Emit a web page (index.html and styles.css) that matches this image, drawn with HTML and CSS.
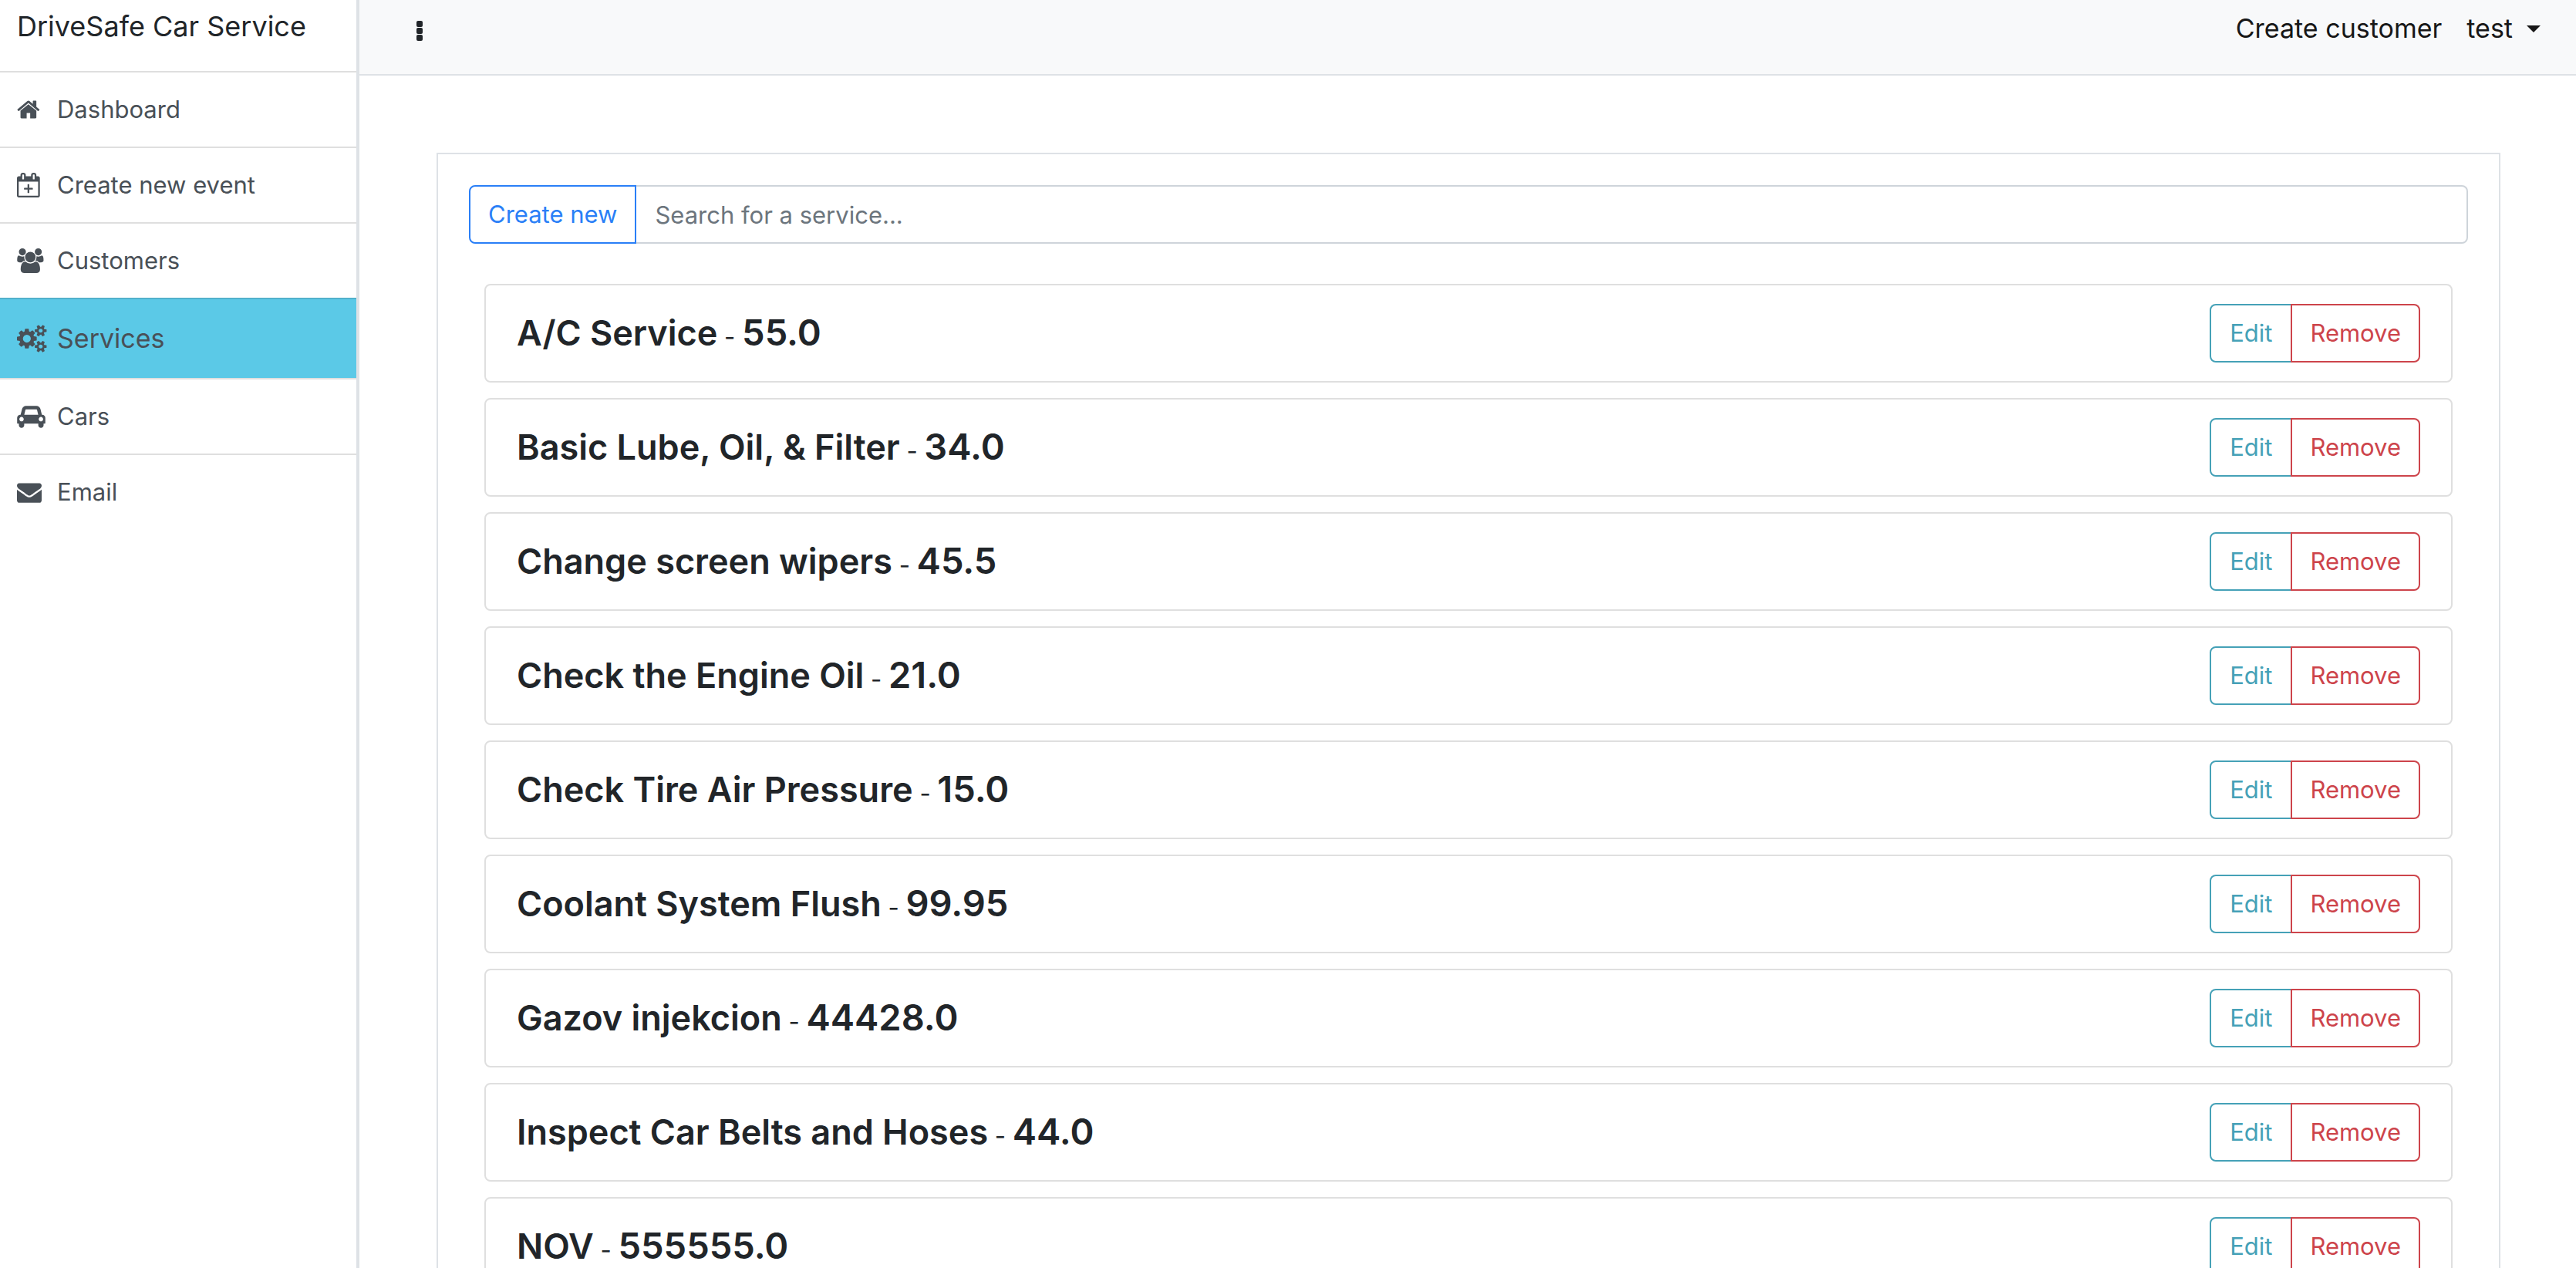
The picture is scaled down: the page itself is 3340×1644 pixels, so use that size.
FILE: index.html
```html
<!DOCTYPE html>
<html lang="en">
<head>
<meta charset="utf-8">
<meta name="viewport" content="width=device-width, initial-scale=1">
<title>DriveSafe Car Service</title>
<link rel="stylesheet" href="styles.css">
</head>
<body>
<div class="layout">
  <aside class="sidebar">
    <div class="brand">DriveSafe Car Service</div>
    <nav class="menu">
      <a class="menu-item" href="#"><span class="menu-icon"><svg viewBox="64 0 1792 1792"><path d="M1472 992v480q0 26-19 45t-45 19h-384v-384h-256v384h-384q-26 0-45-19t-19-45v-480q0-1 .5-3t.5-3l575-474 575 474q1 2 1 6zm223-69l-62 74q-8 9-21 11h-3q-13 0-21-7l-692-577-692 577q-12 8-24 7-13-2-21-11l-62-74q-8-10-7-23.500t11-21.500l719-599q32-26 76-26t76 26l244 204v-195q0-14 9-23t23-9h192q14 0 23 9t9 23v408l219 182q10 8 11 21.500t-7 23.500z"/></svg></span>Dashboard</a>
      <a class="menu-item" href="#"><span class="menu-icon"><svg viewBox="64 0 1792 1792"><path d="M192 1664h1408v-1024h-1408v1024zm384-1216v-288q0-14-9-23t-23-9h-64q-14 0-23 9t-9 23v288q0 14 9 23t23 9h64q14 0 23-9t9-23zm768 0v-288q0-14-9-23t-23-9h-64q-14 0-23 9t-9 23v288q0 14 9 23t23 9h64q14 0 23-9t9-23zm384-64v1280q0 52-38 90t-90 38h-1408q-52 0-90-38t-38-90v-1280q0-52 38-90t90-38h128v-96q0-66 47-113t113-47h64q66 0 113 47t47 113v96h384v-96q0-66 47-113t113-47h64q66 0 113 47t47 113v96h128q52 0 90 38t38 90z"/><rect x="576" y="1088" width="640" height="128" rx="32"/><rect x="832" y="832" width="128" height="640" rx="32"/></svg></span>Create new event</a>
      <a class="menu-item" href="#"><span class="menu-icon"><svg class="wide" viewBox="64 0 2048 1792"><path d="M657 896q-162 5-265 128h-134q-82 0-138-40.500t-56-118.500q0-353 124-353 6 0 43.500 21t97.500 42.500 119 21.500q67 0 133-23-5 37-5 66 0 139 81 256zm1071 637q0 120-73 189.500t-194 69.500h-874q-121 0-194-69.500t-73-189.500q0-53 3.500-103.500t14-109 26.500-108.500 43-97.500 62-81 85.500-53.500 111.500-20q10 0 43 21.500t73 48 107 48 135 21.500 135-21.500 107-48 73-48 43-21.500q61 0 111.500 20t85.500 53.500 62 81 43 97.500 26.500 108.500 14 109 3.500 103.500zm-1024-1277q0 106-75 181t-181 75-181-75-75-181 75-181 181-75 181 75 75 181zm704 384q0 159-112.500 271.500t-271.500 112.500-271.500-112.500-112.500-271.500 112.500-271.500 271.500-112.500 271.500 112.500 112.500 271.500zm576 225q0 78-56 118.500t-138 40.500h-134q-103-123-265-128 81-117 81-256 0-29-5-66 66 23 133 23 59 0 119-21.500t97.500-42.500 43.500-21q124 0 124 353zm-128-609q0 106-75 181t-181 75-181-75-75-181 75-181 181-75 181 75 75 181z"/></svg></span>Customers</a>
      <a class="menu-item active" href="#" aria-current="page"><span class="menu-icon"><svg class="wide" viewBox="-64 0 2048 1792"><path d="M832 896q0-106-75-181t-181-75-181 75-75 181 75 181 181 75 181-75 75-181zm768 512q0-52-38-90t-90-38-90 38-38 90q0 53 37.500 90.500t90.500 37.500 90.500-37.500 37.500-90.500zm0-1024q0-52-38-90t-90-38-90 38-38 90q0 53 37.500 90.500t90.500 37.500 90.500-37.500 37.500-90.500zm-384 421v185q0 10-7 19.500t-16 10.500l-155 24q-11 35-32 76 34 48 90 115 7 11 7 20 0 12-7 19-23 30-82.500 89.500t-78.500 59.500q-11 0-21-7l-115-90q-37 19-77 31-11 108-23 155-7 24-30 24h-186q-11 0-20-7.500t-10-17.500l-23-153q-34-10-75-31l-118 89q-7 7-20 7-11 0-21-8-144-133-144-160 0-9 7-19 10-14 41-53t47-61q-23-44-35-82l-152-24q-10-1-17-9.500t-7-19.500v-185q0-10 7-19.500t16-10.500l155-24q11-35 32-76-34-48-90-115-7-11-7-20 0-12 7-20 22-30 82-89t79-59q11 0 21 7l115 90q34-18 77-32 11-108 23-154 7-24 30-24h186q11 0 20 7.500t10 17.500l23 153q34 10 75 31l118-89q8-7 20-7 11 0 21 8 144 133 144 160 0 8-7 19-12 16-42 54t-45 60q23 48 34 82l152 23q10 2 17 10.500t7 19.500zm640 533v140q0 16-149 31-12 27-30 52 51 113 51 138 0 4-4 7-122 71-124 71-8 0-46-47t-52-68q-20 2-30 2t-30-2q-14 21-52 68t-46 47q-2 0-124-71-4-3-4-7 0-25 51-138-18-25-30-52-149-15-149-31v-140q0-16 149-31 13-29 30-52-51-113-51-138 0-4 4-7 4-2 35-20t59-34 30-16q8 0 46 46.500t52 67.500q20-2 30-2t30 2q51-71 92-112l6-2q4 0 124 70 4 3 4 7 0 25-51 138 17 23 30 52 149 15 149 31zm0-1024v140q0 16-149 31-12 27-30 52 51 113 51 138 0 4-4 7-122 71-124 71-8 0-46-47t-52-68q-20 2-30 2t-30-2q-14 21-52 68t-46 47q-2 0-124-71-4-3-4-7 0-25 51-138-18-25-30-52-149-15-149-31v-140q0-16 149-31 13-29 30-52-51-113-51-138 0-4 4-7 4-2 35-20t59-34 30-16q8 0 46 46.500t52 67.500q20-2 30-2t30 2q51-71 92-112l6-2q4 0 124 70 4 3 4 7 0 25-51 138 17 23 30 52 149 15 149 31z"/></svg></span>Services</a>
      <a class="menu-item" href="#"><span class="menu-icon"><svg class="wide" viewBox="0 0 2048 1792"><path d="M480 1088q0-66-47-113t-113-47-113 47-47 113 47 113 113 47 113-47 47-113zm36-320h1016l-89-357q-2-8-14-17.500t-21-9.500h-768q-9 0-21 9.500t-14 17.500zm1372 320q0-66-47-113t-113-47-113 47-47 113 47 113 113 47 113-47 47-113zm160-96v384q0 14-9 23t-23 9h-96v128q0 80-56 136t-136 56-136-56-56-136v-128h-1024v128q0 80-56 136t-136 56-136-56-56-136v-128h-96q-14 0-23-9t-9-23v-384q0-93 65.500-158.500t158.500-65.500h28l105-419q23-94 104-157.500t179-63.500h768q98 0 179 63.500t104 157.500l105 419h28q93 0 158.500 65.500t65.500 158.500z"/></svg></span>Cars</a>
      <a class="menu-item" href="#"><span class="menu-icon"><svg viewBox="0 0 1792 1792"><path d="M1792 710v794q0 66-47 113t-113 47h-1472q-66 0-113-47t-47-113v-794q44 49 101 87 362 246 497 345 57 42 92.500 65.500t94.500 48 110 24.500h2q51 0 110-24.500t94.500-48 92.500-65.500q170-123 498-345 57-39 100-87zm0-294q0 79-49 151t-122 123q-376 261-468 325-10 7-42.500 31t-54 38.500-52 32.500-57.500 27-50 9h-2q-23 0-50-9t-57.500-27-52-32.500-54-38.500-42.500-31q-91-64-262-182.500t-205-142.500q-62-42-117-115.500t-55-136.500q0-78 41.500-130t118.500-52h1472q65 0 112.500 47t47.500 113z"/></svg></span>Email</a>
    </nav>
  </aside>

  <div class="page">
    <header class="topbar">
      <button class="toggle" type="button" aria-label="Toggle menu"><svg viewBox="0 0 8 28"><rect y="0" width="8" height="8" rx="2"/><rect y="9" width="8" height="8" rx="2"/><rect y="18" width="8" height="8" rx="2"/></svg></button>
      <nav class="topnav">
        <a class="toplink" href="#">Create customer</a>
        <button class="toplink user" type="button" aria-haspopup="true">test<span class="caret"></span></button>
      </nav>
    </header>

    <main class="panel">
      <form class="search">
        <button class="btn btn-primary" type="button">Create new</button>
        <input class="search-input" type="text" placeholder="Search for a service..." aria-label="Search for a service">
      </form>
      <ul class="services">
        <li class="card"><div class="service"><h4>A/C Service</h4> - <h4 class="price">55.0</h4></div><div class="actions"><button class="btn btn-info" type="button">Edit</button><button class="btn btn-danger" type="button">Remove</button></div></li>
        <li class="card"><div class="service"><h4>Basic Lube, Oil, &amp; Filter</h4> - <h4 class="price">34.0</h4></div><div class="actions"><button class="btn btn-info" type="button">Edit</button><button class="btn btn-danger" type="button">Remove</button></div></li>
        <li class="card"><div class="service"><h4>Change screen wipers</h4> - <h4 class="price">45.5</h4></div><div class="actions"><button class="btn btn-info" type="button">Edit</button><button class="btn btn-danger" type="button">Remove</button></div></li>
        <li class="card"><div class="service"><h4>Check the Engine Oil</h4> - <h4 class="price">21.0</h4></div><div class="actions"><button class="btn btn-info" type="button">Edit</button><button class="btn btn-danger" type="button">Remove</button></div></li>
        <li class="card"><div class="service"><h4>Check Tire Air Pressure</h4> - <h4 class="price">15.0</h4></div><div class="actions"><button class="btn btn-info" type="button">Edit</button><button class="btn btn-danger" type="button">Remove</button></div></li>
        <li class="card"><div class="service"><h4>Coolant System Flush</h4> - <h4 class="price">99.95</h4></div><div class="actions"><button class="btn btn-info" type="button">Edit</button><button class="btn btn-danger" type="button">Remove</button></div></li>
        <li class="card"><div class="service"><h4>Gazov injekcion</h4> - <h4 class="price">44428.0</h4></div><div class="actions"><button class="btn btn-info" type="button">Edit</button><button class="btn btn-danger" type="button">Remove</button></div></li>
        <li class="card"><div class="service"><h4>Inspect Car Belts and Hoses</h4> - <h4 class="price">44.0</h4></div><div class="actions"><button class="btn btn-info" type="button">Edit</button><button class="btn btn-danger" type="button">Remove</button></div></li>
        <li class="card"><div class="service"><h4>NOV</h4> - <h4 class="price">555555.0</h4></div><div class="actions"><button class="btn btn-info" type="button">Edit</button><button class="btn btn-danger" type="button">Remove</button></div></li>
      </ul>
    </main>
  </div>
</div>
</body>
</html>
```
FILE: styles.css
```css
*, *::before, *::after { box-sizing: border-box; }

body {
  margin: 0;
  background: #fff;
  color: #212529;
  font: 400 31px/48px Inter, "Liberation Sans", sans-serif;
}

button, input { font: inherit; margin: 0; }
a { text-decoration: none; }
svg { display: block; fill: currentColor; }

.layout { display: flex; height: 100vh; overflow: hidden; }

/* Sidebar */
.sidebar { flex: 0 0 466px; border-right: 4px solid #dee2e6; }

.brand {
  height: 94px;
  padding: 4px 22px 0;
  border-bottom: 2px solid #dfdfdf;
  font-size: 36px;
  line-height: 60px;
}

.menu { display: flex; flex-direction: column; }

.menu-item {
  display: flex;
  align-items: center;
  padding: 24px 22px;
  color: #495057;
}

.menu-item + .menu-item { border-top: 2px solid #dfdfdf; }

.menu-item.active {
  padding-block: 27px;
  border-top-color: #51b0cb;
  background: #5bc9e7;
  font-size: 34px;
}

.menu-icon { flex: 0 0 52px; }
.menu-icon svg { width: 32px; height: 32px; }
.menu-icon svg.wide { width: 37px; }
.active .menu-icon svg.wide { width: 41px; height: 36px; }

/* Top bar */
.page { flex: 1; min-width: 0; }

.topbar {
  display: flex;
  justify-content: space-between;
  align-items: flex-start;
  height: 98px;
  padding: 10px 46px 0 64px;
  border-bottom: 2px solid #dee2e6;
  background: #f8f9fa;
}

.toggle {
  padding: 17px 10px;
  border: 0;
  background: none;
  color: #212529;
}

.toggle svg { width: 8px; height: 28px; }

.topnav { display: flex; gap: 32px; }

.toplink {
  padding: 3px 0;
  border: 0;
  background: none;
  color: #171717;
  font-size: 34px;
  line-height: 48px;
}

.user { display: flex; align-items: center; gap: 18px; }

.caret {
  border-top: 9px solid;
  border-inline: 9px solid transparent;
}

/* Services */
.panel {
  margin: 100px 98px 0 100px;
  padding: 40px;
  border: 2px solid #dee2e6;
}

.search { display: flex; }

.btn {
  height: 76px;
  padding: 12px 23px;
  border: 2px solid;
  border-radius: 8px;
  background: #fff;
}

.btn-primary {
  border-radius: 8px 0 0 8px;
  color: #2a7ff7;
}

.btn-info {
  padding-inline: 24px;
  border-radius: 8px 0 0 8px;
  color: #45a1b7;
}

.btn-danger {
  margin-left: -2px;
  border-radius: 0 8px 8px 0;
  color: #cd444b;
}

.search-input {
  flex: 1;
  min-width: 0;
  height: 76px;
  padding: 12px 24px;
  border: 2px solid #ced4da;
  border-left: 0;
  border-radius: 0 8px 8px 0;
  color: #495057;
}

.search-input::placeholder { color: #6c757d; opacity: 1; }

.services {
  display: grid;
  gap: 20px;
  margin: 52px 20px 0;
  padding: 0;
  list-style: none;
}

.card {
  display: flex;
  justify-content: space-between;
  align-items: center;
  height: 128px;
  padding: 0 40px;
  border: 2px solid #dfdfdf;
  border-radius: 8px;
}

.service { padding-top: 4px; line-height: 56px; }
.service h4 { display: inline; margin: 0; font-size: 45px; font-weight: 600; }
.service .price { font-size: 47px; }
.actions { display: flex; }
```
